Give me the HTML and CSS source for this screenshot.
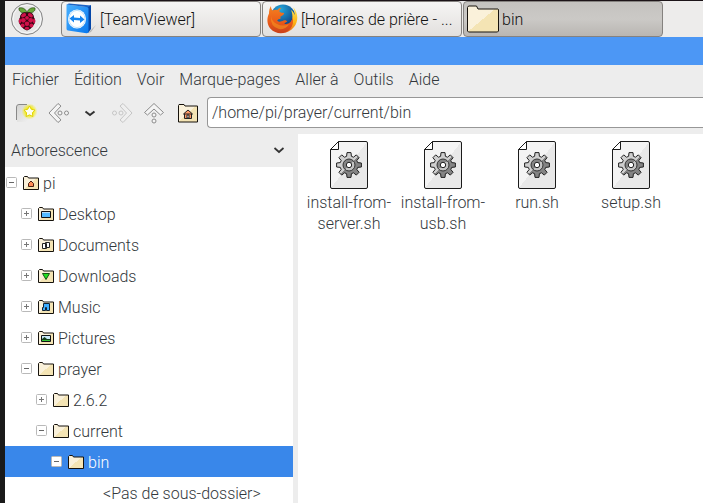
FILE: index.html
```html
<!DOCTYPE html>
<html lang="fr">
<head>
<meta charset="utf-8">
<title>bin</title>
<link rel="stylesheet" href="styles.css">
</head>
<body>
<svg class="defs" aria-hidden="true">
  <defs>
    <linearGradient id="manila" x1="0" y1="0" x2="1" y2="1">
      <stop offset=".5" stop-color="#faf1da"/><stop offset=".5" stop-color="#f4e4b4"/>
    </linearGradient>
    <linearGradient id="paper" x1="0" y1="0" x2="1" y2="1">
      <stop offset=".5" stop-color="#f4f4f4"/><stop offset=".5" stop-color="#e8e8e8"/>
    </linearGradient>
    <linearGradient id="steel" x1="0" y1="0" x2="1" y2="1">
      <stop offset=".5" stop-color="#cfcfcf"/><stop offset=".5" stop-color="#848484"/>
    </linearGradient>
    <linearGradient id="steel-inner" x1="0" y1="0" x2="1" y2="1">
      <stop offset=".5" stop-color="#858585"/><stop offset=".5" stop-color="#c4c4c4"/>
    </linearGradient>
    <linearGradient id="tv-face" x1="0" y1="0" x2="1" y2="1">
      <stop offset="0" stop-color="#48b0ff"/><stop offset="1" stop-color="#0878ee"/>
    </linearGradient>
    <linearGradient id="fox" x1="0" y1="0" x2="0" y2="1">
      <stop offset="0" stop-color="#f58220"/><stop offset=".6" stop-color="#ea5a18"/><stop offset="1" stop-color="#c9401a"/>
    </linearGradient>
    <linearGradient id="fox-tail" x1="0" y1="0" x2="0" y2="1">
      <stop offset="0" stop-color="#ffe45a"/><stop offset=".6" stop-color="#fdb515"/><stop offset="1" stop-color="#e8661a"/>
    </linearGradient>
    <radialGradient id="globe" cx=".4" cy=".2" r=".8">
      <stop offset="0" stop-color="#23a8dd"/><stop offset="1" stop-color="#0b2f72"/>
    </radialGradient>
    <radialGradient id="glow">
      <stop offset=".4" stop-color="#f8ee00"/><stop offset="1" stop-color="#f8ee00" stop-opacity="0"/>
    </radialGradient>
    <linearGradient id="tab-shade" x1="0" y1="0" x2="1" y2="1">
      <stop offset="0" stop-color="#c4c4c0"/><stop offset=".8" stop-color="#ededed"/>
    </linearGradient>
    <symbol id="folder" viewBox="0 0 16 14">
      <path d="M.5 1.500 1.500.5h3l1 1.500h10v11.500H.5z" fill="url(#manila)" stroke="#16120c" stroke-linejoin="round"/>
    </symbol>
    <symbol id="script" viewBox="0 0 38 48">
      <path d="M8.500.5H36q1.500 0 1.500 1.500v44q0 1.500-1.500 1.500H2Q.5 47.500.5 46V8.500z" fill="url(#paper)" stroke="#1b1b1b"/>
      <path d="M.5 8.500h8v-8z" fill="#fff" stroke="#1b1b1b" stroke-linejoin="round"/>
      <g transform="translate(19 24)" stroke="#222" stroke-linejoin="round">
        <path d="M12.400-2v4l-3.700.4-.9 2.100 2.300 2.800-2.800 2.800-2.800-2.300-2.100.9L2 12.400h-4l-.4-3.700-2.100-.9-2.800 2.300-2.800-2.800 2.300-2.800-.9-2.100L-12.400 2v-4l3.700-.4.9-2.100-2.300-2.800 2.800-2.800 2.800 2.300 2.100-.9L-2-12.400h4l.4 3.700 2.100.9 2.800-2.300 2.800 2.800-2.300 2.800.9 2.100z" fill="url(#steel)"/>
        <circle r="6" fill="url(#steel-inner)" stroke="#333"/>
        <circle r="2.700" fill="#fff"/>
      </g>
    </symbol>
    <symbol id="minus" viewBox="0 0 11 11">
      <rect x=".5" y=".5" width="10" height="10" rx="1" fill="#fff" stroke="#b9b9b9"/><path d="M3 5.500h5" stroke="#666"/>
    </symbol>
    <symbol id="plus" viewBox="0 0 11 11">
      <rect x=".5" y=".5" width="10" height="10" rx="1" fill="#fff" stroke="#b9b9b9"/><path d="M3 5.500h5M5.500 3v5" stroke="#777"/>
    </symbol>
  </defs>
</svg>

<header class="panel">
  <button class="start" type="button" aria-label="Menu">
    <svg width="34" height="34" viewBox="0 0 34 34">
      <circle cx="17" cy="17" r="15.500" fill="#e6e6e6" stroke="#858585"/>
      <circle cx="17" cy="17" r="14" fill="none" stroke="#f8f8f8"/>
      <path d="M17 11C11 11.500 8.500 9 9 6c3-.8 7 .4 8 5 1-4.600 5-5.800 8-5 .5 3-2 5.500-8 5z" fill="#68a83a" stroke="#2c4a1a" stroke-width=".7"/>
      <path d="M17 10.500c4.500-1 7 2 7 5 2 3 1.500 6-1 8-1 2.500-3.500 4.500-6 5-2.500-.5-5-2.500-6-5-2.500-2-3-5-1-8 0-3 2.500-6 7-5z" fill="#350512"/>
      <g fill="#cf1149">
        <ellipse cx="13.600" cy="13.300" rx="2.700" ry="1.800" transform="rotate(-30 13.600 13.300)"/>
        <ellipse cx="20.400" cy="13.300" rx="2.700" ry="1.800" transform="rotate(30 20.400 13.300)"/>
        <circle cx="17" cy="15.800" r="1.900"/>
        <circle cx="13.300" cy="18.300" r="2.400"/><circle cx="20.700" cy="18.300" r="2.400"/>
        <circle cx="17" cy="21.700" r="2.300"/>
        <ellipse cx="9.900" cy="19" rx="1.200" ry="2.500"/><ellipse cx="24.100" cy="19" rx="1.200" ry="2.500"/>
        <circle cx="12.600" cy="23.600" r="2"/><circle cx="21.400" cy="23.600" r="2"/>
        <ellipse cx="17" cy="26.200" rx="2.300" ry="1.500"/>
      </g>
    </svg>
  </button>
  <nav class="tasks">
    <button class="task" type="button">
      <svg width="32" height="32" viewBox="0 0 32 32">
        <path d="M23 30l8-8-5 7z" fill="#b5b5b5"/>
        <path d="M22 4l4-2v24l-3 4z" fill="#0446a8"/>
        <path d="M1.500 1.500 22 4q1.500.2 1.500 1.500v23q0 2-2 1.800L3 27.500q-1.500-.2-1.500-2z" fill="url(#tv-face)"/>
        <path d="M1.500 1.500 4 .5l22 2-2.800 1.800z" fill="#1a63c6"/>
        <ellipse cx="12" cy="16" rx="9" ry="9.600" fill="#fff"/>
        <ellipse cx="12" cy="16" rx="8" ry="8.600" fill="none" stroke="#bfe0fa"/>
        <path d="M4.500 15.500 9 12v2.500l6 .5v-2.500l4.500 4-4.500 3.500v-2.500l-6-.5v2.500z" fill="#1684ee"/>
      </svg>
      <span>[TeamViewer]</span>
    </button>
    <button class="task" type="button">
      <svg width="32" height="32" viewBox="0 0 32 32">
        <circle cx="17" cy="14" r="12.500" fill="url(#globe)"/>
        <path d="M27 4c5 5 6 14 1 20-4 5-10 7-15 5l2-5c6 1 10-2 11-7 1-4 0-8-1-10 2 1 3 3 3.500 5C29 9 28 6 27 4z" fill="url(#fox-tail)"/>
        <path d="M5 3c0 2 .4 3.300 1.500 4.500C8.500 6.400 10 6.500 11.500 7c1-1.500 2.500-2 4-2.200-1.300 1.200-2 2.400-2 4 1 1 2.800 1 4.500 1.200.3 1.500-1.500 2.500-3.500 3.500v2.200c-1.500.1-3 .7-3.300 2 1.800 1.800 4.300.8 6.300-.2 2-.7 3.200.2 3.800 1.200-1.300.2-2 1-3 2 2 .6 4.500.1 6.200-1.700 1.300-1.400 1.800-3 2-4.700 1.300 4 .5 8.500-2.500 12-5 5.500-14.500 5-19.500-.6C.5 21 .8 15 3 10.500 3 8 3.500 5 5 3z" fill="url(#fox)"/>
        <path d="M5 13q1 6 6 8 6 3 12 0-3 6-10 5Q4 24 5 13z" fill="#f79a22" opacity=".55"/>
      </svg>
      <span>[Horaires de prière - ...</span>
    </button>
    <button class="task active" type="button" aria-pressed="true">
      <svg width="32" height="28" viewBox="0 0 32 28">
        <path d="M.5 2.500 1.500 1h8l1.500 3H31l.5.500V26l-1 1H1.500l-1-1z" fill="url(#manila)" stroke="#16120c" stroke-linejoin="round"/>
      </svg>
      <span>bin</span>
    </button>
  </nav>
</header>

<main class="window">
  <div class="titlebar"></div>
  <nav class="menubar">
    <button type="button">Fichier</button>
    <button type="button">Édition</button>
    <button type="button">Voir</button>
    <button type="button">Marque-pages</button>
    <button type="button">Aller à</button>
    <button type="button">Outils</button>
    <button type="button">Aide</button>
  </nav>
  <div class="toolbar">
    <button type="button" aria-label="Nouvel onglet">
      <svg width="24" height="24" viewBox="0 0 24 24">
        <path d="M2 21V6q0-2 2-2h14v17z" fill="url(#tab-shade)" opacity=".6"/>
        <path d="M1.500 19V6q0-2.500 2.500-2.500h8" fill="none" stroke="#888"/>
        <circle cx="14.500" cy="10.500" r="8" fill="url(#glow)"/>
        <path d="m14.500 5 1.800 3.300 3.700.8-2.600 2.700.5 3.700-3.400-1.600-3.400 1.600.5-3.700L9 9.100l3.700-.8z" fill="#fffef0" stroke="#e0d200"/>
      </svg>
    </button>
    <button type="button" aria-label="Précédent">
      <svg class="arrow" width="24" height="24" viewBox="0 0 24 24">
        <path d="M2 12 11 2.500l3 2.500-6.500 7 6.500 7-3 2.500z"/><circle cx="13" cy="12" r="2"/><circle cx="19.500" cy="12" r="2"/>
      </svg>
    </button>
    <button type="button" aria-label="Historique">
      <svg width="24" height="24" viewBox="0 0 24 24"><path d="m6.500 10.500 4.500 3.500 4.500-3.500" fill="none" stroke="#333" stroke-width="2"/></svg>
    </button>
    <button type="button" aria-label="Suivant">
      <svg class="arrow faint" width="24" height="24" viewBox="0 0 24 24">
        <path d="M21 12 12 2.500 9 5l6.500 7L9 19l3 2.500z"/><circle cx="10" cy="12" r="2"/><circle cx="3.500" cy="12" r="2"/>
      </svg>
    </button>
    <button type="button" aria-label="Dossier parent">
      <svg class="arrow" width="24" height="24" viewBox="0 0 24 24">
        <path d="m11 2.500 9.500 9-3 2.500-6.500-6-6.500 6-3-2.500z"/><circle cx="11" cy="14" r="2"/><circle cx="11" cy="20" r="2"/>
      </svg>
    </button>
    <button type="button" aria-label="Dossier personnel">
      <svg width="24" height="24" viewBox="0 0 24 24">
        <g transform="translate(1 0)">
          <path d="M2.500 4.500 3 3.500h5l1 1.500h12.500v16h-19z" fill="url(#manila)" stroke="#16120c" stroke-linejoin="round"/>
          <path d="M8.500 12.500v5h7v-5" fill="#ff9966" stroke="#222"/><path d="m7.500 13 4.500-4 4.500 4z" fill="#ff9966" stroke="#222"/><path d="M11 17v-3h2v3z" fill="#fff" stroke="#222"/>
        </g>
      </svg>
    </button>
    <input class="location" type="text" aria-label="Emplacement" value="/home/pi/prayer/current/bin">
  </div>

  <div class="panes">
    <aside class="sidebar">
      <button class="side-head" type="button">
        <span>Arborescence</span>
        <svg width="12" height="10" viewBox="0 0 12 10"><path d="m1.500 2 4.500 4 4.500-4" fill="none" stroke="#333" stroke-width="1.700"/></svg>
      </button>
      <ul class="tree">
        <li class="node level-0">
          <button type="button" aria-label="Réduire pi"><svg width="11" height="11"><use href="#minus"/></svg></button>
          <svg width="16" height="14" viewBox="0 0 16 14"><use href="#folder"/><path d="M5.500 10.500v-3L8 5l2.500 2.500v3z" fill="#ff8a55" stroke="#4a2010"/></svg>
          <span>pi</span>
        </li>
        <li class="node level-1">
          <button type="button" aria-label="Développer Desktop"><svg width="11" height="11"><use href="#plus"/></svg></button>
          <svg width="16" height="14" viewBox="0 0 16 14"><use href="#folder"/><path d="M3.500 4.500h9v6h-9z" fill="#55bbff" stroke="#111"/><path d="M4 5.500h8" stroke="#b8ddf5"/></svg>
          <span>Desktop</span>
        </li>
        <li class="node level-1">
          <button type="button" aria-label="Développer Documents"><svg width="11" height="11"><use href="#plus"/></svg></button>
          <svg width="16" height="14" viewBox="0 0 16 14"><use href="#folder"/><path d="M4.500 5.500h4v5h-4zM7.500 4.500h4v5h-4z" fill="#fff" stroke="#222"/></svg>
          <span>Documents</span>
        </li>
        <li class="node level-1">
          <button type="button" aria-label="Développer Downloads"><svg width="11" height="11"><use href="#plus"/></svg></button>
          <svg width="16" height="14" viewBox="0 0 16 14"><use href="#folder"/><path d="M4.500 4.500h7L8 10.500z" fill="#1fe01f" stroke="#145014"/></svg>
          <span>Downloads</span>
        </li>
        <li class="node level-1">
          <button type="button" aria-label="Développer Music"><svg width="11" height="11"><use href="#plus"/></svg></button>
          <svg width="16" height="14" viewBox="0 0 16 14"><use href="#folder"/><path d="M5.500 7.500v-4h6v7h-3v-3h-1v3h-3v-3z" fill="#3daeff" stroke="#123"/></svg>
          <span>Music</span>
        </li>
        <li class="node level-1">
          <button type="button" aria-label="Développer Pictures"><svg width="11" height="11"><use href="#plus"/></svg></button>
          <svg width="16" height="14" viewBox="0 0 16 14"><use href="#folder"/><path d="M3.500 4.500h9v6h-9z" fill="#c9e9fa" stroke="#111"/><path d="M4 9V8l2.500-2L9 8h3v1z" fill="#164018"/><path d="M4 9.500h8" stroke="#35c335"/></svg>
          <span>Pictures</span>
        </li>
        <li class="node level-1">
          <button type="button" aria-label="Réduire prayer"><svg width="11" height="11"><use href="#minus"/></svg></button>
          <svg width="16" height="14"><use href="#folder"/></svg>
          <span>prayer</span>
        </li>
        <li class="node level-2">
          <button type="button" aria-label="Développer 2.6.2"><svg width="11" height="11"><use href="#plus"/></svg></button>
          <svg width="16" height="14"><use href="#folder"/></svg>
          <span>2.6.2</span>
        </li>
        <li class="node level-2">
          <button type="button" aria-label="Réduire current"><svg width="11" height="11"><use href="#minus"/></svg></button>
          <svg width="16" height="14"><use href="#folder"/></svg>
          <span>current</span>
        </li>
        <li class="node level-3 selected">
          <button type="button" aria-label="Réduire bin"><svg width="11" height="11"><use href="#minus"/></svg></button>
          <svg width="16" height="14"><use href="#folder"/></svg>
          <span>bin</span>
        </li>
        <li class="node empty"><span>&lt;Pas de sous-dossier&gt;</span></li>
      </ul>
    </aside>
    <section class="files">
      <figure class="file"><svg width="38" height="48"><use href="#script"/></svg><figcaption>install-from-server.sh</figcaption></figure>
      <figure class="file"><svg width="38" height="48"><use href="#script"/></svg><figcaption>install-from-usb.sh</figcaption></figure>
      <figure class="file"><svg width="38" height="48"><use href="#script"/></svg><figcaption>run.sh</figcaption></figure>
      <figure class="file"><svg width="38" height="48"><use href="#script"/></svg><figcaption>setup.sh</figcaption></figure>
    </section>
  </div>
</main>
</body>
</html>
```
FILE: styles.css
```css
* {
  box-sizing: border-box;
}

body {
  margin: 0;
  height: 100vh;
  display: flex;
  flex-direction: column;
  overflow: hidden;
  border-left: 5px solid #1a1a1a;
  background: #ededed;
  color: #33383c;
  font: 300 16px/21px Roboto, "Liberation Sans", sans-serif;
}

button {
  margin: 0;
  padding: 0;
  border: 0;
  background: none;
  color: inherit;
  font: inherit;
}

svg {
  display: block;
  flex: none;
}

.defs {
  position: absolute;
  width: 0;
  height: 0;
}

.panel {
  flex: none;
  display: flex;
  border-top: 1px solid #1c1418;
  background: #edeceb;
}

.start {
  padding: 1px 5px;
  margin-right: 12px;
}

.tasks {
  flex: 1;
  display: flex;
  gap: 1px;
  min-width: 0;
}

.task {
  flex: 0 1 200px;
  min-width: 0;
  height: 36px;
  padding: 0 3px;
  display: flex;
  align-items: center;
  gap: 3px;
  border: 1px solid #85827f;
  border-radius: 4px;
  background: linear-gradient(#f6f5f4, #e2e0de);
  color: #111;
}

.task.active {
  background: linear-gradient(#c4c2bf, #cbc9c6 50%, #b9b6b2);
}

.task span {
  white-space: nowrap;
}

.window {
  flex: 1;
  min-height: 0;
  display: flex;
  flex-direction: column;
}

.titlebar {
  flex: none;
  height: 28px;
  background: #4c97f5;
}

.menubar {
  flex: none;
  display: flex;
  gap: 15px;
  padding: 4px 7px;
}

.toolbar {
  flex: none;
  display: flex;
  align-items: center;
  padding: 3px 0 6px 10px;
}

.toolbar button {
  margin-right: 8px;
}

.arrow {
  fill: #f4f4f4;
  stroke: #8c8c8c;
}

.faint {
  opacity: .4;
}

.location {
  flex: 1;
  min-width: 0;
  height: 31px;
  padding: 0 4px;
  border: 1px solid #979797;
  border-right: 0;
  border-radius: 4px 0 0 4px;
  background: #fff;
  color: inherit;
  font: inherit;
}

.panes {
  flex: 1;
  min-height: 0;
  display: flex;
  gap: 5px;
}

.sidebar {
  flex: 0 0 288px;
  display: flex;
  flex-direction: column;
  overflow: hidden;
}

.side-head {
  flex: none;
  height: 33px;
  padding: 0 8px 0 6px;
  display: flex;
  align-items: center;
  justify-content: space-between;
}

.tree {
  flex: 1;
  margin: 0;
  padding: 0;
  list-style: none;
  background: #fff;
}

.node {
  height: 31px;
  display: flex;
  align-items: center;
  gap: 4px;
  white-space: nowrap;
}

.node button {
  margin-right: 2px;
}

.node span {
  padding-top: 2px;
}

.level-0 {
  padding-left: 1px;
}

.level-1 {
  padding-left: 16px;
}

.level-2 {
  padding-left: 31px;
}

.level-3 {
  padding-left: 46px;
}

.empty {
  padding-left: 98px;
}

.selected {
  background: #3987ea;
  color: #fff;
}

.files {
  flex: 1;
  min-width: 0;
  padding: 7px 4px;
  display: grid;
  grid-template-columns: repeat(auto-fill, 94px);
  align-content: start;
  background: #fff;
}

.file {
  margin: 0;
  display: flex;
  flex-direction: column;
  align-items: center;
  gap: 3px;
  text-align: center;
}
```
